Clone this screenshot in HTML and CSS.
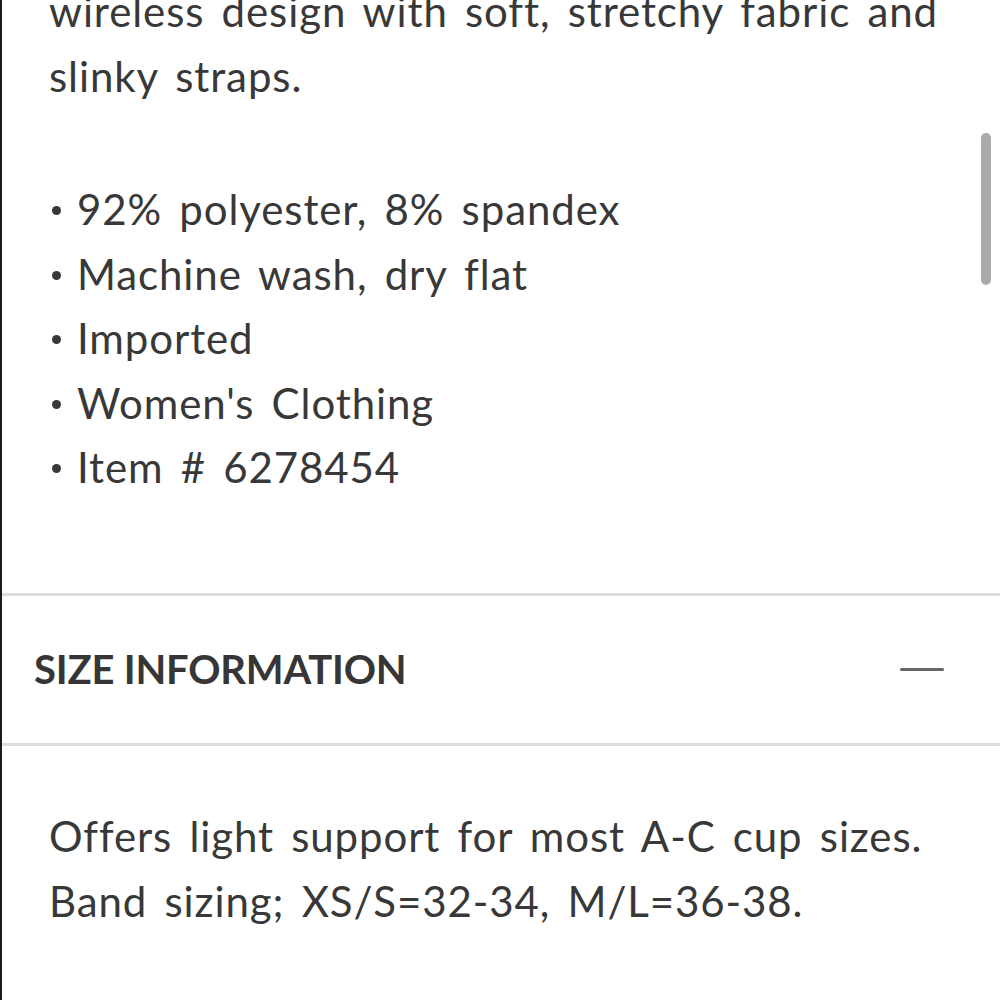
FILE: index.html
```html
<!DOCTYPE html>
<html>
<head>
<meta charset="utf-8">
<link rel="stylesheet" href="styles.css">
</head>
<body>
<div class="page">
  <section class="details">
    <p class="desc">wireless design with soft, stretchy fabric and<br>slinky straps.</p>
    <ul class="facts">
      <li>92% polyester, 8% spandex</li>
      <li>Machine wash, dry flat</li>
      <li>Imported</li>
      <li>Women's Clothing</li>
      <li>Item # 6278454</li>
    </ul>
  </section>
  <div class="accordion-head">
    <h2 class="accordion-title">SIZE INFORMATION</h2>
    <span class="minus"></span>
  </div>
  <section class="size-body">
    <p class="size-text">Offers light support for most A-C cup sizes.<br>Band sizing; XS/S=32-34, M/L=36-38.</p>
  </section>
  <div class="scrollbar"></div>
</div>
</body>
</html>
```

FILE: styles.css
```css
html, body {
  margin: 0;
  padding: 0;
  background: #fff;
}
.page {
  position: relative;
  height: 1000px;
  overflow: hidden;
  border-left: 2px solid #1a1a1a;
  box-sizing: border-box;
  font-family: "Lato", "Noto Sans", sans-serif;
  color: #383838;
}
.details {
  padding: 0 20px 0 47px;
  margin-top: -21px;
}
.desc {
  margin: 0;
  font-size: 42px;
  line-height: 65px;
  letter-spacing: 0.9px;
  word-spacing: 5.6px;
  white-space: nowrap;
}
.facts {
  list-style: none;
  margin: 68px 0 93px 0;
  padding: 0;
  font-size: 42px;
  line-height: 64.5px;
  letter-spacing: 0.9px;
  word-spacing: 5.6px;
}
.facts li {
  display: flex;
  align-items: baseline;
}
.facts li::before {
  content: "";
  flex: none;
  width: 9px;
  height: 9px;
  border-radius: 50%;
  background: #383838;
  margin: 0 16px 0 3px;
  position: relative;
  top: -10px;
}
.accordion-head {
  display: flex;
  align-items: center;
  justify-content: space-between;
  height: 147px;
  border-top: 3px solid #dddddd;
  border-bottom: 3px solid #dddddd;
  padding: 0 56px 0 32px;
}
.accordion-title {
  margin: 0;
  font-size: 40px;
  font-weight: 700;
  letter-spacing: -0.2px;
  color: #363636;
}
.minus {
  display: block;
  width: 44px;
  height: 3px;
  background: #666;
  border-radius: 2px;
}
.size-body {
  padding: 0 20px 0 47px;
}
.size-text {
  margin: 58px 0 0 0;
  font-size: 42px;
  line-height: 65px;
  letter-spacing: 0.9px;
  word-spacing: 5.6px;
  white-space: nowrap;
}
.scrollbar {
  position: absolute;
  top: 133px;
  left: 979px;
  width: 10px;
  height: 152px;
  border-radius: 5px;
  background: #aaaaaa;
}
```
